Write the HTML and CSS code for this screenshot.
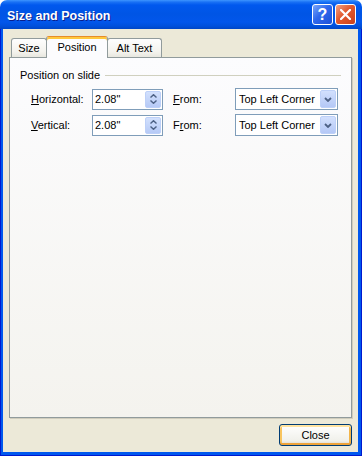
FILE: index.html
```html
<!DOCTYPE html>
<html lang="en">
<head>
  <meta charset="UTF-8">
  <meta name="viewport" content="width=device-width, initial-scale=1.0">
  <title>Size and Position</title>
  <link rel="stylesheet" href="styles.css">
</head>
<body>
  <div class="window">
    <!-- title bar -->
    <div class="titlebar">
      <span class="title">Size and Position</span>
      <div class="caption-buttons">
        <span class="cap-btn help">?</span>
        <span class="cap-btn close">
          <svg width="11" height="11" viewBox="0 0 11 11"><path d="M1 1 L10 10 M10 1 L1 10" stroke="#fff" stroke-width="2.2" stroke-linecap="square"/></svg>
        </span>
      </div>
    </div>

    <div class="frame">
      <div class="client">
        <!-- tabs -->
        <div class="tabs">
          <div class="tab tab-size">Size</div>
          <div class="tab tab-position active">Position</div>
          <div class="tab tab-alt">Alt Text</div>
        </div>

        <div class="panel">
          <div class="group-title">
            <span>Position on slide</span>
            <span class="rule"></span>
          </div>

          <div class="field-grid">
            <label><u>H</u>orizontal:</label>
            <div class="spin">
              <span class="spin-value">2.08"</span>
              <span class="spin-btn">
                <svg width="7" height="4" viewBox="0 0 7 4"><path d="M0.5 3.5 L3.5 0.7 L6.5 3.5" fill="none" stroke="#4d6185" stroke-width="1.4"/></svg>
                <svg width="7" height="4" viewBox="0 0 7 4"><path d="M0.5 0.5 L3.5 3.3 L6.5 0.5" fill="none" stroke="#4d6185" stroke-width="1.4"/></svg>
              </span>
            </div>
            <label class="from"><u>F</u>rom:</label>
            <div class="combo">
              <span class="combo-value">Top Left Corner</span>
              <span class="combo-btn">
                <svg width="8" height="5" viewBox="0 0 8 5"><path d="M1 1 L4 4 L7 1" fill="none" stroke="#4d6185" stroke-width="1.8"/></svg>
              </span>
            </div>

            <label><u>V</u>ertical:</label>
            <div class="spin">
              <span class="spin-value">2.08"</span>
              <span class="spin-btn">
                <svg width="7" height="4" viewBox="0 0 7 4"><path d="M0.5 3.5 L3.5 0.7 L6.5 3.5" fill="none" stroke="#4d6185" stroke-width="1.4"/></svg>
                <svg width="7" height="4" viewBox="0 0 7 4"><path d="M0.5 0.5 L3.5 3.3 L6.5 0.5" fill="none" stroke="#4d6185" stroke-width="1.4"/></svg>
              </span>
            </div>
            <label class="from">F<u>r</u>om:</label>
            <div class="combo">
              <span class="combo-value">Top Left Corner</span>
              <span class="combo-btn">
                <svg width="8" height="5" viewBox="0 0 8 5"><path d="M1 1 L4 4 L7 1" fill="none" stroke="#4d6185" stroke-width="1.8"/></svg>
              </span>
            </div>
          </div>
        </div>

        <!-- bottom buttons -->
        <div class="footer">
          <button class="btn default">Close</button>
        </div>
      </div>
    </div>
  </div>
</body>
</html>
```

FILE: styles.css
```css
/* base */
body {
  margin: 0;
  font-family: "Liberation Sans", Arial, sans-serif;
  font-size: 11px;
  color: #000;
  background: #fff;
}

.window {
  width: 362px;
  height: 456px;
  display: flex;
  flex-direction: column;
}

/* title bar */
.titlebar {
  flex: none;
  height: 29px;
  box-sizing: border-box;
  padding: 2px 6px 0 7px;
  display: flex;
  align-items: center;
  justify-content: space-between;
  border-radius: 7px 7px 0 0;
  background: linear-gradient(to bottom, #3d95ff 0, #1a72f5 2px, #0058ee 5px, #0055e5 14px, #0256eb 22px, #0050dc 26px, #0046c6 29px);
}
.title {
  color: #fff;
  font-weight: bold;
  font-size: 12.5px;
  text-shadow: 1px 1px 0 #0a1e8c;
}
.caption-buttons {
  display: flex;
  gap: 2px;
  margin-top: -2px;
}
.cap-btn {
  width: 21px;
  height: 21px;
  box-sizing: border-box;
  border: 1px solid #fff;
  border-radius: 3px;
  display: flex;
  align-items: center;
  justify-content: center;
}
.help {
  background: linear-gradient(135deg, #7aa6fa 0, #2f68ec 45%, #1b50d8 100%);
  color: #fff;
  font-weight: bold;
  font-size: 16px;
}
.close {
  background: linear-gradient(135deg, #f2a284 0, #e2592e 45%, #c8401c 100%);
}

/* window frame */
.frame {
  flex: 1;
  display: flex;
  padding: 0 4px 4px 3px;
  background: #0058ee;
  box-shadow: inset 1px 0 0 #0019cf, inset -1px 0 0 #0019cf, inset 0 -1px 0 #0019cf;
}
.client {
  flex: 1;
  display: flex;
  flex-direction: column;
  background: #ece9d8;
}

/* tabs */
.tabs {
  display: flex;
  align-items: flex-end;
  height: 21px;
  margin: 7px 0 0 8px;
}
.tab {
  height: 19px;
  box-sizing: border-box;
  display: flex;
  align-items: center;
  justify-content: center;
  border: 1px solid #919b9c;
  border-bottom: none;
  border-radius: 3px 3px 0 0;
  background: linear-gradient(to bottom, #fefefe, #f4f3ee 70%, #e8e7df);
}
.tab-size { width: 36px; }
.tab-position { width: 62px; margin-left: -1px; }
.tab-alt { width: 55px; margin-left: -1px; }
.tab.active {
  height: 22px;
  margin-bottom: -1px;
  position: relative;
  z-index: 1;
  padding-bottom: 2px;
  background: #fcfcfe;
  border-top-color: #e68b2c;
  box-shadow: inset 0 2px 0 #ffc83c;
}

/* tab page */
.panel {
  flex: 1;
  margin: 0 6px;
  padding: 11px 10px 0 10px;
  border: 1px solid #919b9c;
  background: linear-gradient(to bottom, #fcfcfe, #f4f3ee);
  box-shadow: 1px 1px 0 #d0cdbd;
}
.group-title {
  display: flex;
  align-items: center;
  line-height: 13px;
}
.rule {
  flex: 1;
  height: 1px;
  margin-left: 5px;
  background: #d0d0bf;
}

.field-grid {
  display: grid;
  grid-template-columns: 61px 81px 62px 103px;
  grid-auto-rows: 22px;
  row-gap: 4px;
  align-items: center;
  margin: 6px 0 0 11px;
}

/* spin box */
.spin {
  width: 71px;
  height: 21px;
  box-sizing: border-box;
  border: 1px solid #7f9db9;
  background: #fff;
  display: flex;
  align-items: center;
  padding-left: 2px;
}
.spin-value { flex: 1; }
.spin-btn {
  width: 16px;
  height: 17px;
  margin-right: 1px;
  box-sizing: border-box;
  border: 1px solid #bdd0f8;
  border-radius: 2px;
  background: linear-gradient(to bottom, #d2e0fd, #b6caf6);
  display: flex;
  flex-direction: column;
  align-items: center;
  justify-content: center;
  gap: 2px;
}

/* drop-down */
.combo {
  width: 103px;
  height: 22px;
  box-sizing: border-box;
  border: 1px solid #7f9db9;
  background: #fff;
  display: flex;
  align-items: center;
  padding-left: 3px;
}
.combo-value { flex: 1; white-space: nowrap; }
.combo-btn {
  width: 16px;
  height: 18px;
  margin-right: 1px;
  box-sizing: border-box;
  border: 1px solid #bdd0f8;
  border-radius: 2px;
  background: linear-gradient(to bottom, #d2e0fd, #b4c8f6);
  display: flex;
  align-items: center;
  justify-content: center;
}

/* footer */
.footer {
  height: 34px;
  box-sizing: border-box;
  padding: 6px 6px 6px 0;
  display: flex;
  justify-content: flex-end;
}
.btn {
  width: 73px;
  height: 22px;
  font-family: inherit;
  font-size: 11px;
  color: #000;
  border: 1px solid #003c74;
  border-radius: 3px;
  background: linear-gradient(to bottom, #ffffff, #f0f0ea 80%, #d8d2c6);
  padding: 0;
}
.btn.default {
  box-shadow: inset 0 2px 0 #ffe3a0, inset 0 -2px 0 #eea33a, inset 2px 0 0 #f8c45e, inset -2px 0 0 #f3b54a;
}
```
